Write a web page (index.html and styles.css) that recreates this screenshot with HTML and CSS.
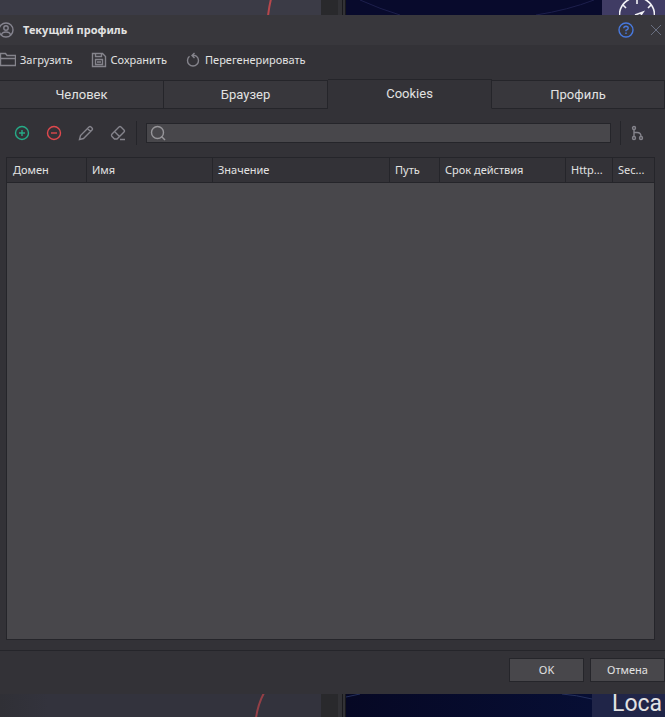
FILE: index.html
```html
<!DOCTYPE html>
<html lang="ru">

<head>
  <meta charset="UTF-8">
  <title>Текущий профиль</title>
  <link rel="stylesheet" href="styles.css">
</head>

<body>
  <div class="backdrop backdrop-top">
    <div class="canvas">
      <svg class="curve" width="60" height="15" viewBox="0 0 60 15"><path d="M10 -1Q8 7 7 16" stroke="#b6474c" stroke-width="2" /></svg>
    </div>
    <div class="splitter"></div>
    <div class="map">
      <svg class="orbit" width="256" height="15" viewBox="0 0 256 15"><path d="M14 0Q34 9 54 15M190 15Q222 10 248 0" stroke="#1d1f4c" /></svg>
      <div class="map-tile tile-top">
        <svg width="36" height="15" viewBox="0 0 36 15" stroke="#f2f2f6" stroke-width="1.6">
          <path d="M0.500 15A17.500 17.500 0 0 1 35.500 15M18 -1V4M4 5L7 8M32 5L29 8M16 15L24 12L22 15" />
        </svg>
      </div>
    </div>
  </div>

  <main class="dialog">
    <header class="title-bar">
      <svg class="icon user-icon" width="16" height="16" viewBox="0 0 16 16">
        <circle cx="8" cy="8" r="7" />
        <circle cx="8" cy="6" r="2.200" />
        <path d="M3.500 13Q4 10 8 10Q12 10 12.500 13" />
      </svg>
      <h1>Текущий профиль</h1>
      <button class="icon-button help" aria-label="Справка">
        <svg class="icon" width="16" height="16" viewBox="0 0 16 16">
          <circle cx="8" cy="8" r="7" />
          <path d="M5.800 6.300Q5.900 4.300 8 4.300Q10.200 4.400 10.200 6.200Q10.200 7.200 8 8.300V9.300M8 10.600V12" />
        </svg>
      </button>
      <button class="icon-button close" aria-label="Закрыть">
        <svg class="icon" width="12" height="12" viewBox="0 0 12 12"><path d="M1 1L11 11M11 1L1 11" /></svg>
      </button>
    </header>

    <div class="toolbar">
      <button class="tool">
        <svg class="icon" width="16" height="16" viewBox="0 0 16 16"><path d="M0.500 13.500V1.500H5.500L7 3.500H15.500V13.500ZM0.500 6.500H15.500" /></svg>
        Загрузить
      </button>
      <button class="tool">
        <svg class="icon" width="16" height="16" viewBox="0 0 16 16"><path d="M1.500 1.500H11.500L14.500 4.500V14.500H1.500ZM4.500 1.500V4.500H10.500V1.500M4.500 7.500H11.500V12.500H4.500ZM6 10H10" /></svg>
        Сохранить
      </button>
      <button class="tool">
        <svg class="icon" width="16" height="16" viewBox="0 0 16 16"><path d="M4.500 4.300A5.500 5.500 0 1 0 11.500 4.300L10 3.500H7.500M9.500 1L7 3.500L9.500 6" /></svg>
        Перегенерировать
      </button>
    </div>

    <nav class="tabs">
      <button class="tab">Человек</button>
      <button class="tab">Браузер</button>
      <button class="tab active">Cookies</button>
      <button class="tab tab-wide">Профиль</button>
    </nav>

    <div class="cookie-bar">
      <button class="icon-button add" aria-label="Добавить">
        <svg class="icon" width="16" height="16" viewBox="0 0 16 16"><circle cx="8" cy="8" r="6.500" /><path d="M8 5V11M5 8H11" /></svg>
      </button>
      <button class="icon-button remove" aria-label="Удалить">
        <svg class="icon" width="16" height="16" viewBox="0 0 16 16"><circle cx="8" cy="8" r="6.500" /><path d="M5 8H11" /></svg>
      </button>
      <button class="icon-button" aria-label="Изменить">
        <svg class="icon" width="16" height="16" viewBox="0 0 16 16"><path d="M1.500 14.500L2.500 10.500L11 2Q12 1 13 2L14 3Q15 4 14 5L5.500 13.500ZM9.500 3.500L12.500 6.500" /></svg>
      </button>
      <button class="icon-button" aria-label="Очистить">
        <svg class="icon" width="16" height="16" viewBox="0 0 16 16"><path d="M2 9L9 2Q10 1 11 2L14 5Q15 6 14 7L7 14H4.500L1.800 11.200Q1 10 2 9ZM4.500 6.500L9.500 11.500M10 14.500H15" /></svg>
      </button>
      <div class="search">
        <svg class="icon" width="16" height="16" viewBox="0 0 16 16"><circle cx="7.500" cy="7.500" r="6" /><path d="M11.500 11.500L15 15" /></svg>
        <input type="text" aria-label="Поиск">
      </div>
      <button class="icon-button" aria-label="Группировка">
        <svg class="icon" width="16" height="16" viewBox="0 0 16 16"><circle cx="4" cy="3" r="1.500" /><circle cx="4" cy="13" r="1.500" /><circle cx="11" cy="13" r="1.500" /><path d="M4 4.500V11.500M4 7.500H7Q11 7.500 11 11.500" /></svg>
      </button>
    </div>

    <div class="grid">
      <table>
        <colgroup>
          <col class="col-domain">
          <col class="col-name">
          <col>
          <col class="col-path">
          <col class="col-expires">
          <col class="col-http">
          <col class="col-secure">
        </colgroup>
        <thead>
          <tr>
            <th>Домен</th>
            <th>Имя</th>
            <th>Значение</th>
            <th>Путь</th>
            <th>Срок действия</th>
            <th>Http...</th>
            <th>Sec...</th>
          </tr>
        </thead>
      </table>
    </div>

    <footer class="footer">
      <button class="button">OK</button>
      <button class="button">Отмена</button>
    </footer>
  </main>

  <div class="backdrop backdrop-bottom">
    <div class="canvas">
      <svg class="curve" width="67" height="23" viewBox="0 0 67 23"><path d="M10 -1Q4 10 2 24" stroke="#943f46" stroke-width="2" /></svg>
    </div>
    <div class="splitter"></div>
    <div class="map">
      <svg class="orbit" width="246" height="23" viewBox="0 0 246 23"><path d="M0 3L14 0M216 0Q230 1 246 5" stroke="#25305c" /></svg>
      <div class="map-tile tile-bottom">Loca</div>
    </div>
  </div>
</body>

</html>
```

FILE: styles.css
```css
html {
  height: 100%;
}

body {
  font-family: "Noto Sans", Tahoma, sans-serif;
  font-size: 11px;
  color: #e2e2e2;
  background-color: #333237;
  display: flex;
  flex-direction: column;
  height: 100%;
  margin: 0;
  overflow: hidden;
}

button,
input {
  font: inherit;
  color: inherit;
  background: none;
  border: none;
  border-radius: 0;
  margin: 0;
  padding: 0;
  box-sizing: border-box;
}

svg {
  display: block;
  flex: none;
  fill: none;
}

.icon {
  stroke: currentColor;
  stroke-width: 1.4;
}

/* windows behind the dialog */
.backdrop {
  display: flex;
  flex: none;
  overflow: hidden;
}

.backdrop-top {
  height: 15px;
}

.backdrop-bottom {
  height: 23px;
}

.canvas {
  flex: 321;
  display: flex;
  justify-content: flex-end;
  background-color: #3b3b46;
}

.backdrop-bottom .canvas {
  background: linear-gradient(90deg, #303036, #33333d 15%);
}

.splitter {
  width: 7px;
  border-left: 17px solid #29292c;
  border-right: 1px solid #19191d;
  background: linear-gradient(90deg, #323236 4px, #19191d 4px, #19191d 5px, #323236 5px);
}

.map {
  flex: 319;
  display: flex;
  justify-content: flex-end;
  background-color: #080a2c;
}

.backdrop-bottom .map {
  background: linear-gradient(90deg, #060824, #071039);
}

.map-tile {
  flex: none;
  box-sizing: border-box;
}

.tile-top {
  width: 63px;
  padding-left: 17px;
  background-color: #403c64;
}

.tile-bottom {
  width: 73px;
  padding-left: 20px;
  font-family: Roboto, sans-serif;
  font-size: 23px;
  line-height: 20px;
  background-color: #202548;
}

.dialog {
  flex: 1;
  display: flex;
  flex-direction: column;
  min-height: 0;
  background-color: #333237;
}

.title-bar {
  display: flex;
  align-items: center;
  height: 30px;
  padding-right: 3px;
  background-color: #38373c;
}

.title-bar h1 {
  flex: 1;
  margin: 0 0 0 9px;
  padding-bottom: 2px;
  font-size: 11px;
  font-weight: bold;
}

.user-icon {
  margin-left: -2px;
  color: #85848f;
}

.icon-button {
  display: flex;
  align-items: center;
  justify-content: center;
  width: 16px;
  height: 16px;
  color: #85848c;
}

.help {
  margin-right: 16px;
  color: #4879de;
}

.close {
  width: 12px;
  color: #686e80;
}

.close .icon {
  stroke-width: 1;
}

.toolbar {
  display: flex;
  gap: 18px;
  height: 30px;
}

.tool {
  display: flex;
  align-items: center;
  gap: 4px;
  padding-bottom: 1px;
}

.tool .icon {
  color: #85848c;
}

.tabs {
  display: flex;
  align-items: flex-end;
  height: 34px;
}

.tab {
  flex: 164;
  height: 29px;
  padding-bottom: 1px;
  font-family: Roboto, sans-serif;
  font-size: 13px;
  background-color: #38373c;
  border: solid #25252a;
  border-width: 1px 1px 1px 0;
}

.tab-wide {
  flex: 173;
}

.tab.active {
  height: 30px;
  background-color: #333237;
  border-bottom-color: #333237;
}

.cookie-bar {
  display: flex;
  align-items: center;
  gap: 16px;
  height: 48px;
  padding: 0 19px 0 14px;
}

.add {
  color: #26ab87;
}

.remove {
  color: #df484d;
}

/* vertical rules on both sides of the search box */
.search {
  flex: 1;
  display: flex;
  align-items: center;
  position: relative;
  height: 20px;
  margin: 0 3px 0 4px;
  padding-left: 3px;
  box-sizing: border-box;
  background-color: #48474b;
  border: 1px solid #25252a;
}

.search::before,
.search::after {
  content: "";
  position: absolute;
  top: -3px;
  width: 1px;
  height: 24px;
  background-color: #25252a;
}

.search::before {
  left: -11px;
}

.search::after {
  right: -11px;
}

.search .icon {
  color: #97969a;
}

.search input {
  flex: 1;
  min-width: 0;
  height: 18px;
  padding: 0 4px;
  outline: none;
}

.grid {
  flex: 1;
  margin: 0 10px 10px 6px;
  background-color: #48474b;
  border: 1px solid #25252a;
}

.grid table {
  width: 100%;
  table-layout: fixed;
  border-collapse: separate;
  border-spacing: 0;
}

.grid th {
  height: 22px;
  padding: 0 0 2px 5px;
  font-weight: normal;
  text-align: left;
  white-space: nowrap;
  background-color: #333237;
  border: solid #25252a;
  border-width: 0 1px 1px 0;
}

.grid th:first-child {
  padding-left: 6px;
}

.grid th:last-child {
  border-right: none;
}

.col-domain {
  width: 80px;
}

.col-name,
.col-expires {
  width: 126px;
}

.col-path {
  width: 50px;
}

.col-http {
  width: 47px;
}

.col-secure {
  width: 41px;
}

.footer {
  display: flex;
  justify-content: flex-end;
  gap: 6px;
  padding: 7px 0 12px;
  border-top: 1px solid #25252a;
}

.button {
  width: 75px;
  height: 24px;
  padding-bottom: 1px;
  background-color: #48474b;
  border: 1px solid #25252a;
}

.button:hover,
.tool:hover {
  color: #fff;
}
```
